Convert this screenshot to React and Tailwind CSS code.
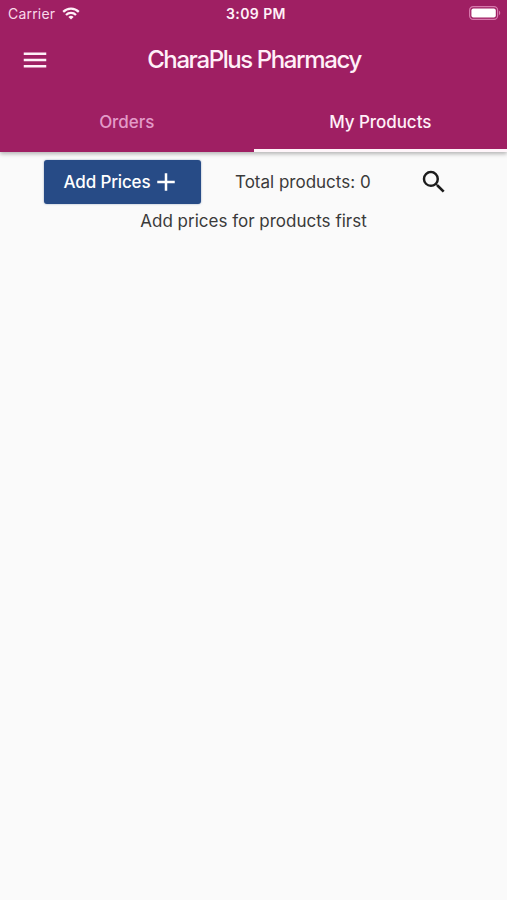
import React, { useState } from "react";
import { MdAdd, MdMenu, MdSearch } from "react-icons/md";

const TABS = ["Orders", "My Products"];

export default function App() {
  const [active, setActive] = useState("My Products");

  return (
    <div className="flex h-[900px] w-[507px] flex-col overflow-hidden bg-[#fafafa] font-['Inter',sans-serif] text-[#3a3a3a]">
      <header className="flex h-[152px] shrink-0 flex-col bg-[#9f1f63] text-[#fff0f8] shadow-[0_2px_4px_rgba(0,0,0,0.28)]">
        <StatusBar />
        <AppBar title="CharaPlus Pharmacy" />
        <nav className="grid grow grid-cols-2">
          {TABS.map((tab) => (
            <Tab key={tab} label={tab} selected={tab === active} onClick={() => setActive(tab)} />
          ))}
        </nav>
      </header>

      <main className="pt-[8px]">
        <Toolbar total={0} />
        <p className="mt-[5px] text-center text-[17px] leading-6">
          Add prices for products first
        </p>
      </main>
    </div>
  );
}

function StatusBar() {
  return (
    <div className="grid h-[27px] grid-cols-3 items-center pl-[8px] pr-[6px]">
      <div className="flex items-center gap-[7px]">
        <span className="text-[14px] leading-5 tracking-[0.2px] text-[#f9d9ea]">Carrier</span>
        <WifiIcon />
      </div>
      <span className="pl-[3px] text-center text-[14px] leading-5 font-semibold tracking-[0.4px]">3:09 PM</span>
      <div className="flex justify-end pb-[2px]">
        <BatteryIcon />
      </div>
    </div>
  );
}

function AppBar({ title }) {
  return (
    <div className="grid h-[66px] grid-cols-[70px_1fr_70px] items-center">
      <button className="flex justify-center" aria-label="Menu">
        <MdMenu size={30} />
      </button>
      <h1 className="pl-[1px] text-center text-[24px] leading-8 font-medium tracking-[-1.4px] whitespace-nowrap">
        {title}
      </h1>
    </div>
  );
}

function Tab({ label, selected, onClick }) {
  return (
    <button
      onClick={onClick}
      className={`border-b-[3px] pt-[2px] text-[17px] leading-6 font-medium tracking-[-0.05px] ${
        selected ? "border-[#fff5fa]" : "border-transparent text-[#e39ac8]"
      }`}
    >
      {label}
    </button>
  );
}

function Toolbar({ total }) {
  return (
    <div className="flex h-[44px] items-center pl-[44px]">
      <button className="flex h-[44px] w-[157px] items-center justify-center gap-[1px] rounded-[3px] bg-[#274b86] text-white shadow-[0_0_2px_rgba(39,75,134,0.5)]">
        <span className="text-[17px] leading-6 font-medium tracking-[-0.15px]">Add Prices</span>
        <MdAdd size={30} />
      </button>
      <span className="ml-[34px] w-[137px] text-[17px] leading-6 whitespace-nowrap">
        Total products: {total}
      </span>
      <button className="ml-[47px] text-[#1c1c1c]" aria-label="Search">
        <MdSearch size={30} />
      </button>
    </div>
  );
}

function WifiIcon() {
  return (
    <svg width="18" height="13" viewBox="0 0 18 13" fill="none" stroke="currentColor" strokeWidth="2.2">
      <path d="M1.2 4.9a11 11 0 0 1 15.6 0" />
      <path d="M4 7.9a7 7 0 0 1 10 0" />
      <path d="M9 12.6 6.4 10a3.7 3.7 0 0 1 5.2 0Z" fill="currentColor" stroke="none" />
    </svg>
  );
}

function BatteryIcon() {
  return (
    <svg width="32" height="14" viewBox="0 0 32 14" fill="none">
      <rect x="0.6" y="0.6" width="28" height="12.8" rx="3.6" stroke="#d779ad" strokeWidth="1.2" />
      <rect x="2.4" y="2.4" width="24.4" height="9.2" rx="2" fill="#fff" />
      <path d="M30 4.8c1.6.6 1.6 3.8 0 4.4Z" fill="#d779ad" />
    </svg>
  );
}
